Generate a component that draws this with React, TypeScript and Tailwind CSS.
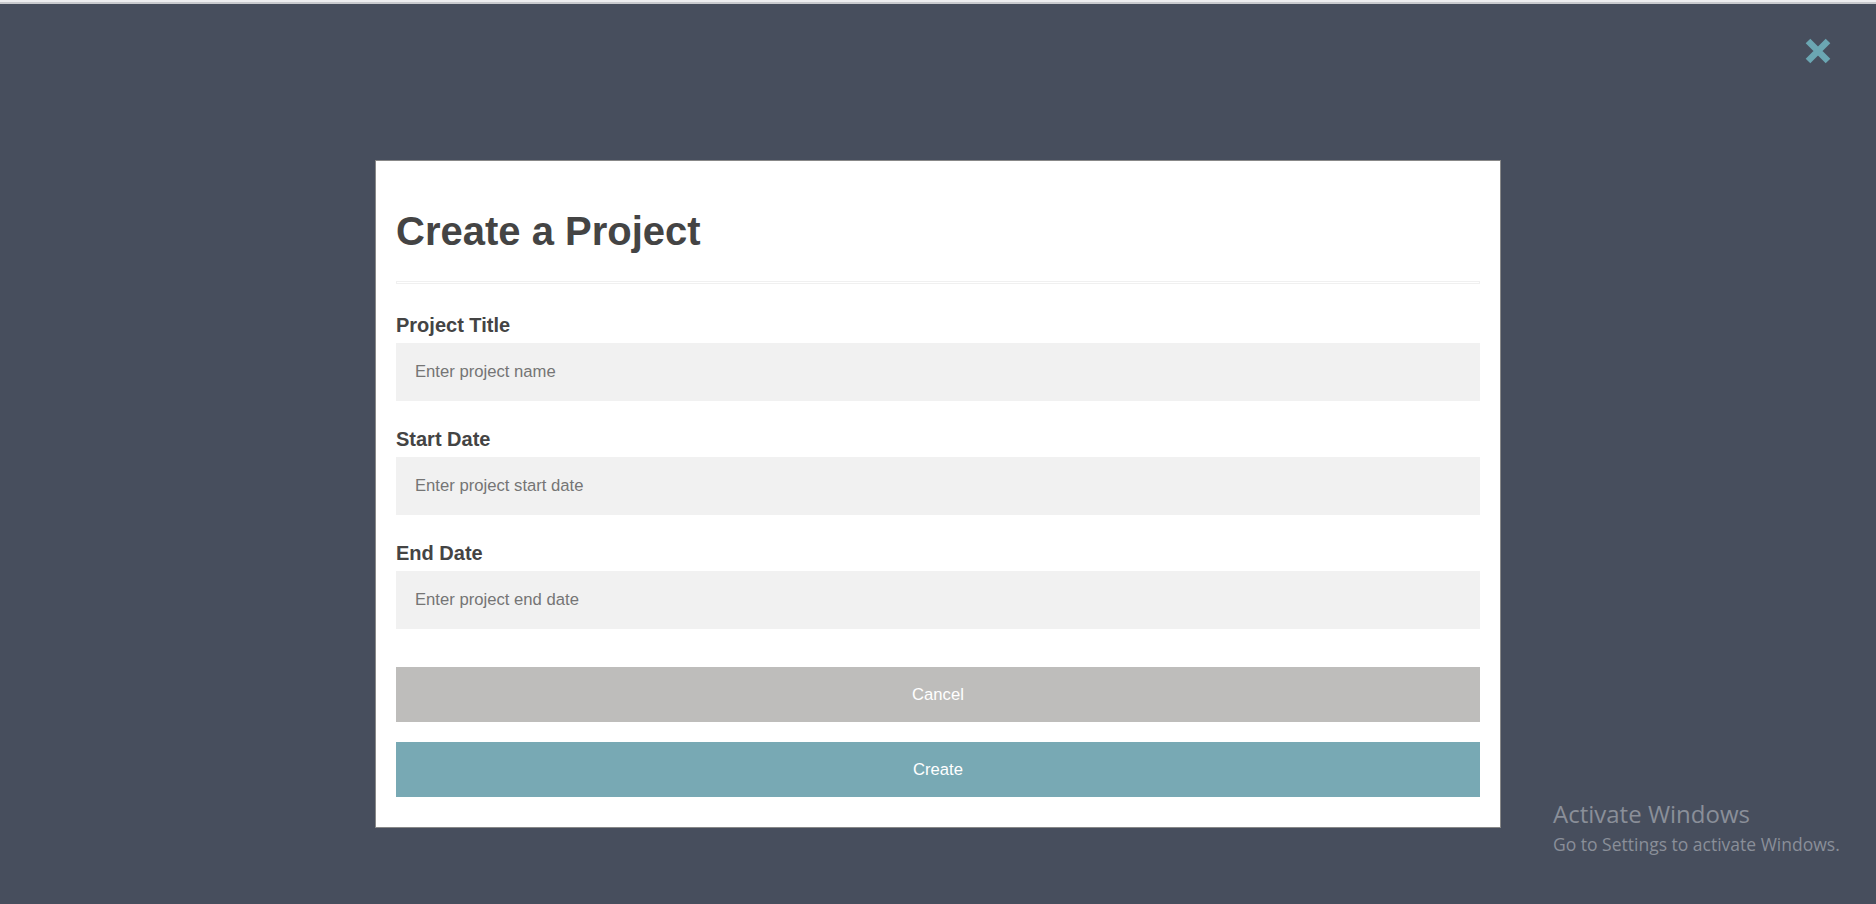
import React from "react";

export default function App() {
  const font = { fontFamily: '"Liberation Sans", Arial, sans-serif' };
  return (
    <div className="relative w-[1876px] h-[904px] overflow-hidden bg-[#474e5d]" style={font}>
      <div className="h-[2px] bg-[#eeeef0]" />
      <div className="h-[2px] bg-[#c9cace]" />

      <button className="absolute left-[1805px] top-[38px] w-[26px] h-[26px] flex items-center justify-center" aria-label="Close">
        <svg width="26" height="26" viewBox="0 0 26 26">
          <path d="M3 3 L23 23 M23 3 L3 23" stroke="#6ba6b2" strokeWidth="6.5" strokeLinecap="butt" />
        </svg>
      </button>

      <div className="flex justify-center pt-[156px]">
        <div className="w-[1126px] flex flex-col bg-white border border-[#888888] px-[20px] pt-[20px] pb-[20px]">
          <h1 className="text-[40px] leading-[46px] font-bold text-[#444444] mt-[27px] mb-[27px]">Create a Project</h1>
          <div className="h-[3px] border border-[#f0f0f0] bg-white mb-[30px]" />

          <Field label="Project Title" placeholder="Enter project name" />
          <Field label="Start Date" placeholder="Enter project start date" />
          <Field label="End Date" placeholder="Enter project end date" />

          <div className="flex flex-col gap-[20px] mt-[11px] mb-[10px]">
            <button className="h-[55px] w-full bg-[#bebdbb] text-white text-[16.67px]">Cancel</button>
            <button className="h-[55px] w-full bg-[#78a9b4] text-white text-[16.67px]">Create</button>
          </div>
        </div>
      </div>

      <div className="absolute left-[1553px] top-[799px] text-[#8a8f99]" style={{ fontFamily: '"Open Sans", "Noto Sans", sans-serif' }}>
        <div className="text-[24px] leading-[30px]">Activate Windows</div>
        <div className="text-[17.5px] leading-[24px] mt-[3px]">Go to Settings to activate Windows.</div>
      </div>
    </div>
  );
}

function Field({ label, placeholder }: { label: string; placeholder: string }) {
  return (
    <div className="mb-[27px]">
      <div className="text-[20px] leading-[23px] font-bold text-[#444444]">{label}</div>
      <input
        className="mt-[6px] block w-full h-[58px] bg-[#f1f1f1] px-[19px] text-[16.67px] text-[#333] placeholder:text-[#757575] outline-none"
        placeholder={placeholder}
      />
    </div>
  );
}
